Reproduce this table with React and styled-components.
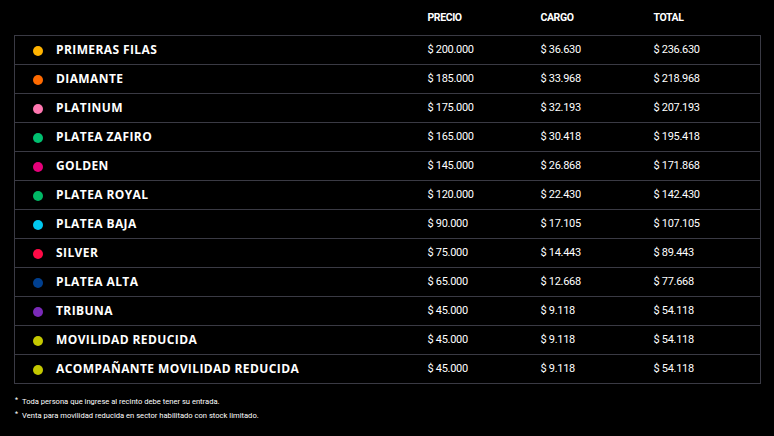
import React from 'react'
import styled, { createGlobalStyle } from 'styled-components'

const GlobalStyle = createGlobalStyle`
  html, body {
    margin: 0;
    padding: 0;
    background: #000;
  }
  body {
    width: 774px;
    height: 436px;
    overflow: hidden;
  }
`

const Page = styled.div`
  padding: 0 14px;
  background: #000;
  color: #fff;
`

const Table = styled.table`
  width: 746px;
  border-collapse: collapse;
  table-layout: fixed;
`

const HeadCell = styled.th`
  height: 35px;
  padding: 0 0 0 14px;
  text-align: left;
  font-family: Roboto, "Liberation Sans", sans-serif;
  font-weight: 700;
  font-size: 10.5px;
  letter-spacing: -0.4px;
  color: #fff;
`

const Row = styled.tr`
  border: 1px solid #3a3a44;
`

const NameCell = styled.td`
  height: 27px;
  padding: 0 0 1px 18px;
`

const Name = styled.div`
  display: flex;
  align-items: center;
  gap: 13px;
  font-family: "Open Sans", "Noto Sans", sans-serif;
  font-weight: 700;
  font-size: 12px;
  letter-spacing: 0.4px;
  line-height: 1;
`

const Dot = styled.span`
  width: 10px;
  height: 10px;
  border-radius: 50%;
  background: ${p => p.$color};
  flex: none;
  margin-top: 2px;
`

const Amount = styled.td`
  padding: 0 0 1px 14px;
  font-family: Roboto, "Liberation Sans", sans-serif;
  font-size: 11px;
  letter-spacing: -0.3px;
  color: #fff;
`

const Notes = styled.ul`
  list-style: none;
  margin: 13px 0 0;
  padding: 0 0 0 1px;
  display: flex;
  flex-direction: column;
  gap: 5px;
`

const Note = styled.li`
  display: flex;
  gap: 4px;
  font-family: Roboto, "Liberation Sans", sans-serif;
  font-size: 7.6px;
  line-height: 9px;
  color: #fff;

  &::before {
    content: '*';
    font-size: 7px;
    line-height: 6px;
  }
`

const rows = [
  ['PRIMERAS FILAS', '#ffb300', '200.000', '36.630', '236.630'],
  ['DIAMANTE', '#ff6a00', '185.000', '33.968', '218.968'],
  ['PLATINUM', '#ff77b0', '175.000', '32.193', '207.193'],
  ['PLATEA ZAFIRO', '#00c070', '165.000', '30.418', '195.418'],
  ['GOLDEN', '#e6007a', '145.000', '26.868', '171.868'],
  ['PLATEA ROYAL', '#00b865', '120.000', '22.430', '142.430'],
  ['PLATEA BAJA', '#00c8f0', '90.000', '17.105', '107.105'],
  ['SILVER', '#ff0a46', '75.000', '14.443', '89.443'],
  ['PLATEA ALTA', '#003f8f', '65.000', '12.668', '77.668'],
  ['TRIBUNA', '#7a2ab8', '45.000', '9.118', '54.118'],
  ['MOVILIDAD REDUCIDA', '#c4c800', '45.000', '9.118', '54.118'],
  ['ACOMPAÑANTE MOVILIDAD REDUCIDA', '#c4c800', '45.000', '9.118', '54.118'],
]

export default function App() {
  return (
    <Page>
      <GlobalStyle />
      <Table>
        <colgroup>
          <col style={{ width: 399 }} />
          <col style={{ width: 113 }} />
          <col style={{ width: 113 }} />
          <col style={{ width: 121 }} />
        </colgroup>
        <thead>
          <tr>
            <HeadCell />
            <HeadCell>PRECIO</HeadCell>
            <HeadCell>CARGO</HeadCell>
            <HeadCell>TOTAL</HeadCell>
          </tr>
        </thead>
        <tbody>
          {rows.map(([name, color, price, fee, total]) => (
            <Row key={name}>
              <NameCell>
                <Name>
                  <Dot $color={color} />
                  {name}
                </Name>
              </NameCell>
              <Amount>$ {price}</Amount>
              <Amount>$ {fee}</Amount>
              <Amount>$ {total}</Amount>
            </Row>
          ))}
        </tbody>
      </Table>
      <Notes>
        <Note>Toda persona que ingrese al recinto debe tener su entrada.</Note>
        <Note>Venta para movilidad reducida en sector habilitado con stock limitado.</Note>
      </Notes>
    </Page>
  )
}
